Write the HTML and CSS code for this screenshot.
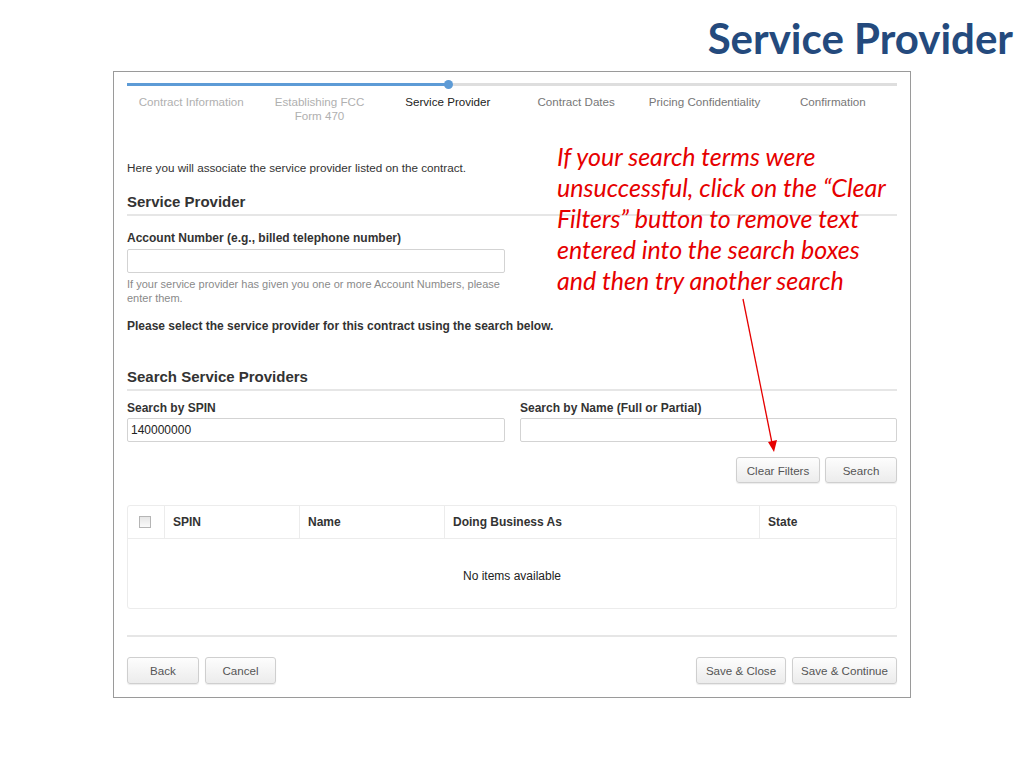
FILE: index.html
```html
<!DOCTYPE html>
<html lang="en">
<head>
    <meta charset="UTF-8">
    <title>Service Provider</title>
    <link rel="stylesheet" href="styles.css">
</head>
<body>
<div class="slide-title">Service Provider</div>

<div class="wizard">
    <!-- Progress track -->
    <div class="progress-track">
        <div class="progress-fill" style="width: 41.67%;">
            <span class="progress-dot"></span>
        </div>
    </div>

    <div class="steps">
        <div class="step done">Contract Information</div>
        <div class="step done">Establishing FCC<br>Form 470</div>
        <div class="step current">Service Provider</div>
        <div class="step">Contract Dates</div>
        <div class="step">Pricing Confidentiality</div>
        <div class="step">Confirmation</div>
    </div>

    <p class="intro">Here you will associate the service provider listed on the contract.</p>

    <h2 class="section-title">Service Provider</h2>

    <div class="field half">
        <label class="field-label">Account Number (e.g., billed telephone number)</label>
        <input type="text" class="text-input">
        <div class="help-text">If your service provider has given you one or more Account Numbers, please enter them.</div>
    </div>

    <p class="instruction">Please select the service provider for this contract using the search below.</p>

    <h2 class="section-title search-title">Search Service Providers</h2>

    <div class="search-row">
        <div class="field">
            <label class="field-label">Search by SPIN</label>
            <input type="text" class="text-input" value="140000000">
        </div>
        <div class="field">
            <label class="field-label">Search by Name (Full or Partial)</label>
            <input type="text" class="text-input">
        </div>
    </div>

    <div class="search-actions">
        <button class="btn btn-clear">Clear Filters</button>
        <button class="btn btn-search">Search</button>
    </div>

    <table class="grid">
        <thead>
            <tr>
                <th class="col-check"><span class="checkbox"></span></th>
                <th class="col-spin">SPIN</th>
                <th class="col-name">Name</th>
                <th class="col-dba">Doing Business As</th>
                <th class="col-state">State</th>
            </tr>
        </thead>
        <tbody>
            <tr>
                <td class="empty" colspan="5">No items available</td>
            </tr>
        </tbody>
    </table>

    <div class="footer-rule"></div>

    <div class="footer-actions">
        <div class="btn-group">
            <button class="btn btn-back">Back</button>
            <button class="btn btn-cancel">Cancel</button>
        </div>
        <div class="btn-group">
            <button class="btn btn-save-close">Save &amp; Close</button>
            <button class="btn btn-save-continue">Save &amp; Continue</button>
        </div>
    </div>
</div>

<!-- Slide callout -->
<div class="callout">If your search terms were unsuccessful, click on the “Clear Filters” button to remove text entered into the search boxes and then try another search</div>

<svg class="callout-arrow" width="1024" height="768" viewBox="0 0 1024 768">
    <line x1="743" y1="299" x2="772" y2="443" stroke="#e60000" stroke-width="1.3"/>
    <polygon points="774,452 768,442 777,440" fill="#e60000"/>
</svg>
</body>
</html>
```

FILE: styles.css
```css
body {
    margin: 0;
    background-color: #fff;
    font-family: "Liberation Sans", Arial, sans-serif;
    color: #333;
    position: relative;
    width: 1024px;
    height: 768px;
    overflow: hidden;
}

.slide-title {
    height: 71px;
    box-sizing: border-box;
    padding: 13px 11px 0 0;
    text-align: right;
    font-family: Lato, "Open Sans", sans-serif;
    font-weight: bold;
    font-size: 42px;
    line-height: 50px;
    color: #244a7d;
}

.wizard {
    margin-left: 113px;
    width: 798px;
    box-sizing: border-box;
    border: 1px solid #9a9a9a;
    padding: 11px 13px 13px 13px;
}

/* Progress */
.progress-track {
    position: relative;
    height: 3px;
    background-color: #dedede;
}

.progress-fill {
    position: relative;
    height: 3px;
    background-color: #5d9bd6;
}

.progress-dot {
    position: absolute;
    right: -5px;
    top: -3px;
    width: 9px;
    height: 9px;
    border-radius: 50%;
    background-color: #5d9bd6;
}

.steps {
    display: grid;
    grid-template-columns: repeat(6, 1fr);
    margin-top: 9px;
    height: 28px;
}

.step {
    text-align: center;
    font-size: 11.6px;
    line-height: 14px;
    color: #777;
}

.step.done {
    color: #b0b0b0;
}

.step.current {
    color: #222;
}

.intro {
    margin: 38px 0 0 0;
    font-size: 11.7px;
    line-height: 14px;
    color: #333;
}

.section-title {
    margin: 18px 0 0 0;
    padding-bottom: 3px;
    border-bottom: 2px solid #e6e6e6;
    font-size: 15px;
    line-height: 18px;
    font-weight: bold;
    color: #333;
}

.search-title {
    margin-top: 35px;
}

.field {
    display: flex;
    flex-direction: column;
}

.field.half {
    width: 378px;
    margin-top: 15px;
}

.field-label {
    font-size: 12px;
    line-height: 14px;
    font-weight: bold;
    color: #333;
    margin-bottom: 4px;
}

.text-input {
    box-sizing: border-box;
    width: 100%;
    height: 24px;
    margin: 0;
    border: 1px solid #d3d3d3;
    border-radius: 2px;
    padding: 0 3px;
    font-family: "Liberation Sans", Arial, sans-serif;
    font-size: 12px;
    color: #222;
    background-color: #fff;
}

.help-text {
    margin-top: 4px;
    font-size: 11px;
    line-height: 14px;
    color: #8a8a8a;
}

.instruction {
    margin: 14px 0 0 0;
    font-size: 12px;
    line-height: 14px;
    font-weight: bold;
    color: #333;
}

.search-row {
    display: grid;
    grid-template-columns: 378px 377px;
    column-gap: 15px;
    margin-top: 10px;
}

.search-row .field-label {
    margin-bottom: 3px;
}

.search-actions {
    display: flex;
    justify-content: flex-end;
    gap: 5px;
    margin-top: 15px;
}

.btn {
    height: 26px;
    box-sizing: border-box;
    border: 1px solid #cfcfcf;
    border-radius: 3px;
    background: linear-gradient(#fdfdfd, #ececec);
    box-shadow: 0 1px 1px rgba(0, 0, 0, 0.08);
    font-family: "Liberation Sans", Arial, sans-serif;
    font-size: 11.6px;
    color: #555;
    padding: 0;
    margin: 0;
    white-space: nowrap;
}

.btn-clear { width: 84px; }
.btn-search { width: 72px; }

/* Results grid */
.grid {
    width: 100%;
    margin-top: 22px;
    border-collapse: separate;
    border-spacing: 0;
    border: 1px solid #ececec;
    border-radius: 3px;
    font-size: 12px;
}

.grid th {
    height: 32px;
    padding: 0 8px;
    text-align: left;
    font-weight: bold;
    color: #333;
    border-bottom: 1px solid #ececec;
    border-left: 1px solid #ececec;
}

.grid th:first-child {
    border-left: none;
}

.col-check { width: 20px; text-align: center; }
.col-spin { width: 118px; }
.col-name { width: 128px; }
.col-dba { width: 298px; }

.checkbox {
    display: inline-block;
    width: 10px;
    height: 10px;
    border: 1px solid #b5b5b5;
    background: linear-gradient(#e6e6e6, #fafafa);
    vertical-align: middle;
    margin-left: 3px;
    margin-top: -2px;
}

.grid td.empty {
    height: 65px;
    text-align: center;
    color: #222;
    padding: 4px 0 0 0;
}

.footer-rule {
    height: 2px;
    margin-top: 26px;
    background-color: #e6e6e6;
}

.footer-actions {
    display: flex;
    justify-content: space-between;
    margin-top: 20px;
}

.btn-group {
    display: flex;
    gap: 6px;
}

.footer-actions .btn {
    height: 27px;
}

.btn-back { width: 72px; }
.btn-cancel { width: 71px; }
.btn-save-close { width: 90px; }
.btn-save-continue { width: 105px; }

/* Slide annotation */
.callout {
    position: absolute;
    left: 557px;
    top: 141px;
    width: 335px;
    font-family: Lato, "Open Sans", sans-serif;
    font-style: italic;
    font-size: 25px;
    line-height: 31px;
    color: #e60000;
}

.callout-arrow {
    position: absolute;
    left: 0;
    top: 0;
    pointer-events: none;
}
```
